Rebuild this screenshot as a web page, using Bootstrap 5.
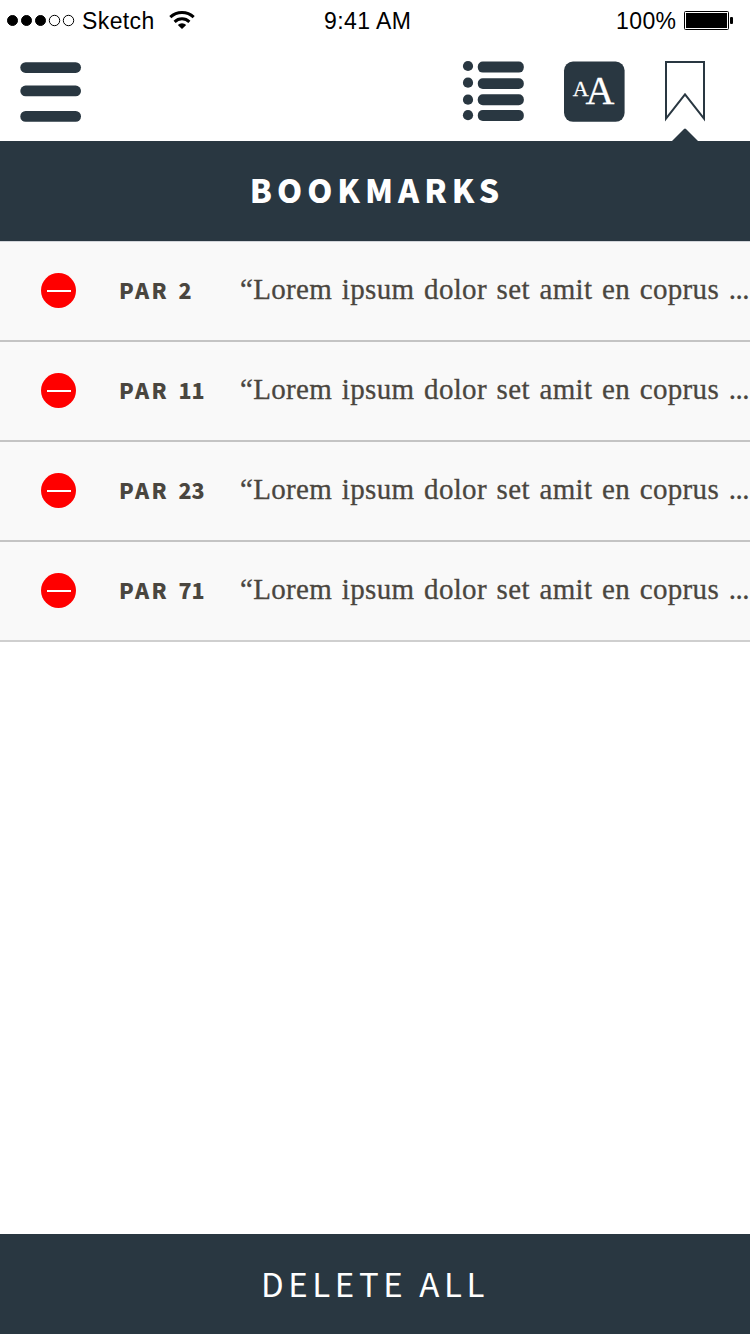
<!DOCTYPE html>
<html lang="en">
<head>
<meta charset="utf-8">
<meta name="viewport" content="width=device-width, initial-scale=1">
<title>Bookmarks</title>
<link href="https://cdn.jsdelivr.net/npm/bootstrap@5.3.0/dist/css/bootstrap.min.css" rel="stylesheet">
<style>
:root { --ink: #293741; }
body { font-family: "Liberation Sans", sans-serif; color: #000; }
.screen { height: 1334px; }
.statusbar { height: 41px; font-size: 23px; line-height: 42px; letter-spacing: .4px; }
.carrier { margin-left: 6px; }
.wifi { left: 168px; }
.clock { left: 324px; }
.charge { left: 616px; }
.battery { left: 684px; }
.toolbar { height: 100px; }
.title-band, .footer-band { height: 100px; background: var(--ink) !important; font-family: "Noto Sans CJK SC", sans-serif; line-height: 96px; }
.title-band { font-size: 32px; font-weight: 900; letter-spacing: 5px; }
.footer-band { font-size: 33px; font-weight: 400; letter-spacing: 4.6px; border-radius: 0; padding: 0 0 2px; }
.pointer { left: 671px; top: -13px; }
.marks .mark-row { height: 100px; background: #f9f9f9; border: 0; border-bottom: 2px solid #c4c4c4 !important; border-radius: 0; padding: 0 0 1px 41px; color: #4a463f; }
.marks .mark-row:first-child { border-top: 1px solid #d2d5da; height: 101px; }
.marks .mark-row:last-child { border-bottom-color: #cfcfcf !important; }
.par { width: 121px; margin-left: 43px; padding-bottom: 2px; font: 900 21.5px/94px "Noto Sans CJK SC", sans-serif; letter-spacing: 2.4px; }
.par-no { letter-spacing: 0; margin-left: 2px; }
.quote { font: 29px/94px "Liberation Serif", serif; letter-spacing: .33px; word-spacing: 2.1px; -webkit-text-stroke: .3px #4a463f; padding-bottom: 3px; }
.dots { letter-spacing: -.5px; }
</style>
</head>
<body>
<div class="screen d-flex flex-column bg-white overflow-hidden">
  <header class="statusbar d-flex position-relative">
    <svg width="76" height="41" aria-hidden="true"><g stroke="#000" stroke-width="1"><circle cx="12.5" cy="20.5" r="5"/><circle cx="26.5" cy="20.5" r="5"/><circle cx="40.5" cy="20.5" r="5"/><g fill="none"><circle cx="54.5" cy="20.5" r="5.2"/><circle cx="68.5" cy="20.5" r="5.2"/></g></g></svg>
    <span class="carrier">Sketch</span>
    <svg class="wifi position-absolute" width="28" height="41" aria-hidden="true"><g fill="none" stroke="#000" stroke-width="3"><path d="M2.3 17.2a17 17 0 0 1 23.4 0"/><path d="M6.6 21.8a10.8 10.8 0 0 1 14.8 0"/></g><path d="M9.8 25a6 6 0 0 1 8.4 0L14 29z"/></svg>
    <span class="clock position-absolute">9:41 AM</span>
    <span class="charge position-absolute">100%</span>
    <svg class="battery position-absolute" width="50" height="41" aria-hidden="true"><rect x=".5" y="11.5" width="44" height="18" rx="1" fill="none" stroke="#000"/><rect x="2" y="13" width="41" height="15"/><rect x="46" y="17" width="3" height="7" rx="1"/></svg>
  </header>

  <nav class="toolbar d-flex align-items-start" aria-label="Tools">
    <svg class="me-auto" width="100" height="100" fill="#293741"><rect x="20.3" y="21.2" width="60.7" height="10.7" rx="5.3"/><rect x="20.3" y="44.6" width="60.7" height="10.7" rx="5.3"/><rect x="20.3" y="70" width="60.7" height="10.7" rx="5.3"/></svg>
    <svg width="300" height="100" fill="#293741">
      <circle cx="18" cy="25" r="5.1"/><circle cx="18" cy="41.7" r="5.1"/><circle cx="18" cy="58.7" r="5.1"/><circle cx="18" cy="74.2" r="5.1"/>
      <rect x="27.8" y="20.6" width="46" height="11" rx="5"/><rect x="27.8" y="37.2" width="46" height="10.8" rx="5"/><rect x="27.8" y="53.3" width="46" height="11" rx="5"/><rect x="27.8" y="69" width="46" height="11" rx="5"/>
      <rect x="114" y="20.6" width="60.6" height="60.2" rx="9"/>
      <text x="122.8" y="55" fill="#fff" stroke="#fff" stroke-width=".3" font-family="Liberation Serif, serif" font-size="22">A<tspan x="135.6" y="63" font-size="40">A</tspan></text>
      <path d="M216 21h38v56.5L235 53.3l-19 24.2z" fill="none" stroke="#293741" stroke-width="2"/>
    </svg>
  </nav>

  <div class="title-band position-relative text-white text-center">
    <svg class="pointer position-absolute" width="28" height="14"><path d="M0 14L13 1q1-1 2 0l13 13z" fill="#293741"/></svg>
    <span class="ps-1">BOOKMARKS</span>
  </div>

  <div class="marks list-group list-group-flush flex-grow-1">
    <div class="list-group-item mark-row d-flex align-items-center text-nowrap"><svg class="flex-shrink-0" width="35" height="35"><circle cx="17.5" cy="17.5" r="17.5" fill="red"/><path d="M6 18h24" stroke="#fff" stroke-width="2"/></svg><span class="par flex-shrink-0">PAR <span class="par-no">2</span></span><span class="quote">“Lorem ipsum dolor set amit en coprus <span class="dots">...</span></span></div>
    <div class="list-group-item mark-row d-flex align-items-center text-nowrap"><svg class="flex-shrink-0" width="35" height="35"><circle cx="17.5" cy="17.5" r="17.5" fill="red"/><path d="M6 18h24" stroke="#fff" stroke-width="2"/></svg><span class="par flex-shrink-0">PAR <span class="par-no">11</span></span><span class="quote">“Lorem ipsum dolor set amit en coprus <span class="dots">...</span></span></div>
    <div class="list-group-item mark-row d-flex align-items-center text-nowrap"><svg class="flex-shrink-0" width="35" height="35"><circle cx="17.5" cy="17.5" r="17.5" fill="red"/><path d="M6 18h24" stroke="#fff" stroke-width="2"/></svg><span class="par flex-shrink-0">PAR <span class="par-no">23</span></span><span class="quote">“Lorem ipsum dolor set amit en coprus <span class="dots">...</span></span></div>
    <div class="list-group-item mark-row d-flex align-items-center text-nowrap"><svg class="flex-shrink-0" width="35" height="35"><circle cx="17.5" cy="17.5" r="17.5" fill="red"/><path d="M6 18h24" stroke="#fff" stroke-width="2"/></svg><span class="par flex-shrink-0">PAR <span class="par-no">71</span></span><span class="quote">“Lorem ipsum dolor set amit en coprus <span class="dots">...</span></span></div>
  </div>

  <button type="button" class="footer-band btn border-0 text-white">DELETE ALL</button>
</div>
<script src="https://cdn.jsdelivr.net/npm/bootstrap@5.3.0/dist/js/bootstrap.bundle.min.js"></script>
</body>
</html>
